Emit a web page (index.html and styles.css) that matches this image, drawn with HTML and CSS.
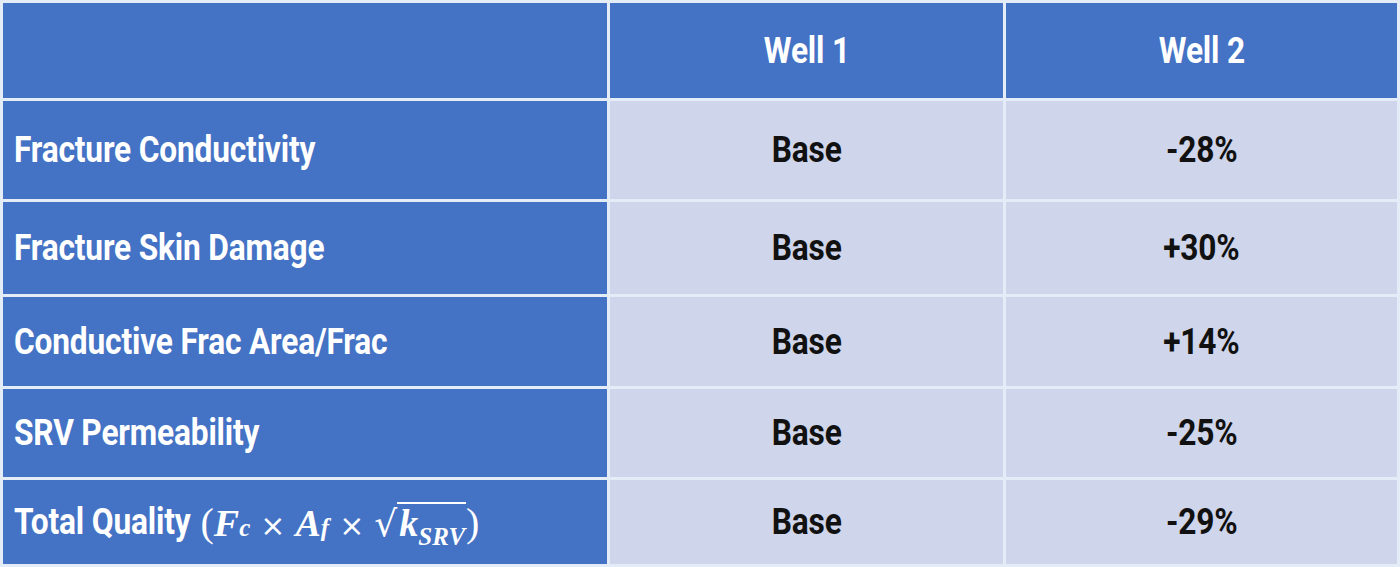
FILE: index.html
```html
<!DOCTYPE html>
<html>
<head>
<meta charset="utf-8">
<link rel="stylesheet" href="styles.css">
</head>
<body>
<div class="table">
  <div class="cell head label"></div>
  <div class="cell head val"><span class="t">Well 1</span></div>
  <div class="cell head val"><span class="t">Well 2</span></div>

  <div class="cell label"><span class="t">Fracture Conductivity</span></div>
  <div class="cell val"><span class="t">Base</span></div>
  <div class="cell val"><span class="t">-28%</span></div>

  <div class="cell label"><span class="t">Fracture Skin Damage</span></div>
  <div class="cell val"><span class="t">Base</span></div>
  <div class="cell val"><span class="t">+30%</span></div>

  <div class="cell label"><span class="t">Conductive Frac Area/Frac</span></div>
  <div class="cell val"><span class="t">Base</span></div>
  <div class="cell val"><span class="t">+14%</span></div>

  <div class="cell label"><span class="t">SRV Permeability</span></div>
  <div class="cell val"><span class="t">Base</span></div>
  <div class="cell val"><span class="t">-25%</span></div>

  <div class="cell label"><span class="t">Total Quality</span><span class="math"><span class="paren">(</span><span class="v">F</span><sub class="s">c</sub><span class="op">×</span><span class="v">A</span><sub class="s">f</sub><span class="op">×</span><span class="root"><span class="rad">√</span><span class="under"><span class="v">k</span><sub class="s">SRV</sub></span></span><span class="paren">)</span></span></div>
  <div class="cell val"><span class="t">Base</span></div>
  <div class="cell val"><span class="t">-29%</span></div>
</div>
</body>
</html>
```

FILE: styles.css
```css
html, body {
  margin: 0;
  padding: 0;
  background: #e4ecf7;
}

.table {
  width: 1400px;
  height: 567px;
  box-sizing: border-box;
  display: grid;
  grid-template-columns: 604px 393px 391px;
  grid-template-rows: 95px 98px 92px 89px 88px 84px;
  gap: 3px;
  padding: 3px;
  background: #e4ecf7;
  font-family: Roboto, "Liberation Sans", sans-serif;
  font-weight: 700;
  font-size: 36px;
}

.cell {
  display: flex;
  align-items: center;
  background: #cfd5ea;
  color: #111111;
  overflow: hidden;
}

.label {
  background: #4472c4;
  color: #ffffff;
  padding-left: 11px;
}

.head {
  background: #4472c4;
  color: #ffffff;
}

.val {
  justify-content: center;
}

.t {
  display: inline-block;
  transform: scaleX(0.88);
  white-space: nowrap;
  letter-spacing: -0.2px;
}

.label .t {
  transform-origin: left center;
}

.math {
  display: inline-flex;
  align-items: baseline;
  margin-left: -14px;
  font-family: "Liberation Serif", "DejaVu Serif", serif;
  font-weight: 700;
  font-size: 36px;
  white-space: nowrap;
}

.paren {
  font-style: normal;
  font-weight: 400;
  font-size: 40px;
}

.v {
  font-style: italic;
  font-size: 38px;
}

.s {
  font-style: italic;
  font-size: 25px;
  vertical-align: -9px;
  line-height: 0;
}

.op {
  font-family: "DejaVu Sans", sans-serif;
  font-weight: 400;
  font-size: 30px;
  margin: 0 10px;
}

.root {
  display: inline-flex;
  align-items: baseline;
}

.rad {
  font-family: "DejaVu Sans", sans-serif;
  font-weight: 400;
  font-size: 36px;
}

.under {
  border-top: 2px solid #ffffff;
  padding-left: 2px;
  padding-right: 1px;
  line-height: 1.05;
}
```
